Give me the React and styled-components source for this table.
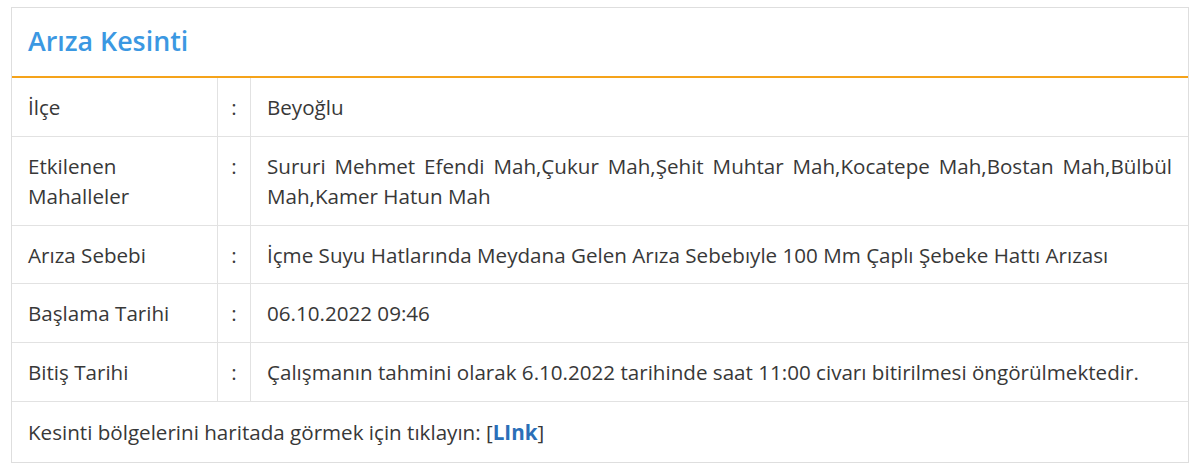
import React from 'react';
import styled, { createGlobalStyle } from 'styled-components';

const GlobalStyle = createGlobalStyle`
    html, body {
        margin: 0;
        padding: 0;
        background: #ffffff;
    }
    body {
        font-family: "Open Sans", "Noto Sans", sans-serif;
        color: #383838;
    }
`;

const Page = styled.div`
    padding: 7px 11px;
`;

const Card = styled.div`
    width: 1178px;
    box-sizing: border-box;
    border: 1px solid #dedede;
    background: #fff;
`;

const CardHeader = styled.div`
    height: 70px;
    box-sizing: border-box;
    display: flex;
    align-items: center;
    padding: 0 16px 3px;
    border-bottom: 2px solid #f5a31a;
`;

const Title = styled.h3`
    margin: 0;
    font-size: 26.8px;
    font-weight: 600;
    color: #3b98e2;
`;

const InfoTable = styled.table`
    width: 100%;
    border-collapse: collapse;
    font-size: 20.6px;
    line-height: 30px;
`;

const Row = styled.tr`
    border-bottom: 1px solid #e2e2e2;
`;

const Cell = styled.td`
    padding: 14px 16px 13.8px;
    vertical-align: top;
    text-align: ${(p) => (p.$justify ? 'justify' : 'left')};
    border-right: ${(p) => (p.$last ? 'none' : '1px solid #e2e2e2')};
`;

const LabelCell = styled(Cell)`
    width: 173px;
`;

const ColonCell = styled(Cell)`
    width: 32px;
    padding-left: 0;
    padding-right: 0;
    text-align: center;
`;

const Footer = styled.div`
    height: 60px;
    display: flex;
    align-items: center;
    padding: 0 16px;
    font-size: 20.6px;
`;

const LinkText = styled.a`
    color: #2a6fb8;
    font-weight: 700;
    text-decoration: none;
`;

const rows = [
    { label: 'İlçe', value: 'Beyoğlu' },
    {
        label: 'Etkilenen Mahalleler',
        value: 'Sururi Mehmet Efendi Mah,Çukur Mah,Şehit Muhtar Mah,Kocatepe Mah,Bostan Mah,Bülbül Mah,Kamer Hatun Mah'
    },
    { label: 'Arıza Sebebi', value: 'İçme Suyu Hatlarında Meydana Gelen Arıza Sebebıyle 100 Mm Çaplı Şebeke Hattı Arızası' },
    { label: 'Başlama Tarihi', value: '06.10.2022 09:46' },
    { label: 'Bitiş Tarihi', value: 'Çalışmanın tahmini olarak 6.10.2022 tarihinde saat 11:00 civarı bitirilmesi öngörülmektedir.' }
];

const App = () => (
    <Page>
        <GlobalStyle />
        <Card>
            <CardHeader>
                <Title>Arıza Kesinti</Title>
            </CardHeader>
            <InfoTable>
                <tbody>
                    {rows.map((row) => (
                        <Row key={row.label}>
                            <LabelCell>{row.label}</LabelCell>
                            <ColonCell>:</ColonCell>
                            <Cell $last $justify>{row.value}</Cell>
                        </Row>
                    ))}
                </tbody>
            </InfoTable>
            <Footer>
                Kesinti bölgelerini haritada görmek için tıklayın: [<LinkText href="#">LInk</LinkText>]
            </Footer>
        </Card>
    </Page>
);

export default App;
